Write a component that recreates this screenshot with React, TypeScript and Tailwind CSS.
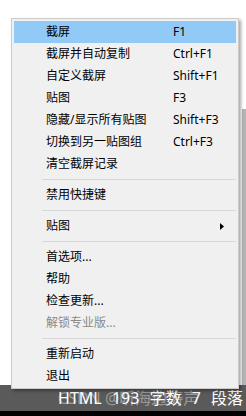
const font = { fontFamily: '"Noto Sans", "Noto Sans CJK SC", sans-serif' }

type Item = { label: string; key?: string; active?: boolean; disabled?: boolean; sub?: boolean } | "sep"

const items: Item[] = [
  { label: "截屏", key: "F1", active: true },
  { label: "截屏并自动复制", key: "Ctrl+F1" },
  { label: "自定义截屏", key: "Shift+F1" },
  { label: "贴图", key: "F3" },
  { label: "隐藏/显示所有贴图", key: "Shift+F3" },
  { label: "切换到另一贴图组", key: "Ctrl+F3" },
  { label: "清空截屏记录" },
  "sep",
  { label: "禁用快捷键" },
  "sep",
  { label: "贴图", sub: true },
  "sep",
  { label: "首选项..." },
  { label: "帮助" },
  { label: "检查更新..." },
  { label: "解锁专业版...", disabled: true },
  "sep",
  { label: "重新启动" },
  { label: "退出" },
]

function MenuRow({ item }: { item: Exclude<Item, "sep"> }) {
  return (
    <div
      className={
        "flex h-[22px] items-center pl-[32px] text-[12px] leading-none " +
        (item.active ? "bg-[#91c9f7] " : "") +
        (item.disabled ? "text-[#8a8a8a]" : "text-black")
      }
    >
      <span className="w-[127px] whitespace-nowrap">{item.label}</span>
      {item.key && <span className="whitespace-nowrap">{item.key}</span>}
      {item.sub && (
        <svg className="ml-[47px]" width="4" height="7" viewBox="0 0 4 7">
          <path d="M0 0 L4 3.5 L0 7 Z" fill="#000" />
        </svg>
      )}
    </div>
  )
}

export default function App() {
  return (
    <div className="relative flex h-[416px] w-[246px] flex-col overflow-hidden bg-white" style={font}>
      <div className="flex flex-1 flex-row">
        <div className="flex-1 bg-white" />
        <div className="flex w-[4px] flex-col">
          <div className="h-[109px] bg-white" />
          <div className="flex-1 bg-[#b4b4b4]" />
        </div>
      </div>
      <div className="relative flex h-[26px] items-center justify-end bg-[#5a5a5a] pr-[3px] text-[16px] leading-none text-white">
        <span className="whitespace-nowrap [word-spacing:6px]">HTML 193 字数 7 段落</span>
        <span className="absolute left-[58px] top-[5px] whitespace-nowrap text-white/40">CSDN @听海边涛声</span>
      </div>
      <div className="h-[5px] bg-black" />

      <div className="absolute left-[11px] top-[18px] w-[228px] border border-[#cccccc] bg-[#f0f0f0] px-[2px] pt-[2px] pb-[1px] shadow-[2px_2px_3px_rgba(0,0,0,0.35)]">
        {items.map((item, i) =>
          item === "sep" ? (
            <div key={i} className="flex h-[9px] items-center pl-[28px]">
              <div className="h-px w-full bg-[#d7d7d7]" />
            </div>
          ) : (
            <MenuRow key={i} item={item} />
          )
        )}
      </div>
    </div>
  )
}
